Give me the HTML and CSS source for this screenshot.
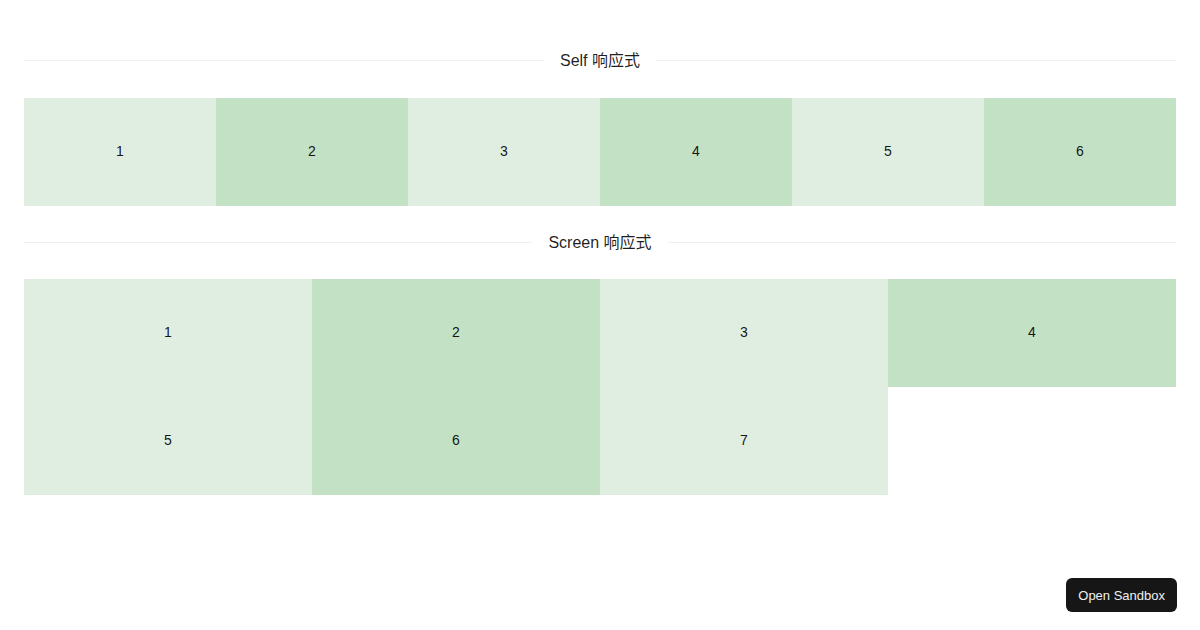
FILE: index.html
```html
<!DOCTYPE html>
<html lang="zh">
<head>
<meta charset="utf-8">
<link rel="stylesheet" href="styles.css">
</head>
<body>
<div class="page">
  <div class="divider first"><span class="divider-text">Self 响应式</span></div>
  <div class="grid six">
    <div class="cell light">1</div>
    <div class="cell dark">2</div>
    <div class="cell light">3</div>
    <div class="cell dark">4</div>
    <div class="cell light">5</div>
    <div class="cell dark">6</div>
  </div>
  <div class="divider"><span class="divider-text">Screen 响应式</span></div>
  <div class="grid four">
    <div class="cell light">1</div>
    <div class="cell dark">2</div>
    <div class="cell light">3</div>
    <div class="cell dark">4</div>
    <div class="cell light">5</div>
    <div class="cell dark">6</div>
    <div class="cell light">7</div>
  </div>
</div>
<button class="sandbox">Open Sandbox</button>
</body>
</html>
```
FILE: styles.css
```css
html, body {
  margin: 0;
  padding: 0;
  background: #ffffff;
  font-family: "Liberation Sans", Arial, "Noto Sans CJK SC", sans-serif;
  color: rgba(0, 0, 0, 0.88);
}
.page {
  padding: 24px 24px 0;
}
.divider {
  display: flex;
  align-items: center;
  height: 24px;
  margin: 24px 0 25px;
  font-size: 16px;
  line-height: 24px;
}
.divider.first {
  margin-top: 24px;
  margin-bottom: 26px;
}
.divider::before,
.divider::after {
  content: "";
  flex: 1;
  border-top: 1px solid rgba(5, 5, 5, 0.06);
}
.divider-text {
  padding: 2px 1em 0;
  white-space: nowrap;
}
.grid {
  display: grid;
}
.grid.six {
  grid-template-columns: repeat(6, 1fr);
}
.grid.four {
  grid-template-columns: repeat(4, 1fr);
}
.cell {
  height: 108px;
  box-sizing: border-box;
  padding-bottom: 2px;
  display: flex;
  align-items: center;
  justify-content: center;
  font-size: 14px;
  color: rgba(0, 0, 0, 0.92);
}
.light {
  background: #dfeee0;
}
.dark {
  background: #c3e1c4;
}
.sandbox {
  position: fixed;
  right: 23px;
  bottom: 18px;
  height: 34px;
  padding: 0 12px;
  border: none;
  border-radius: 6px;
  background: #161616;
  color: #f0f0f0;
  font-family: "Liberation Sans", Arial, sans-serif;
  font-size: 13px;
}
```
